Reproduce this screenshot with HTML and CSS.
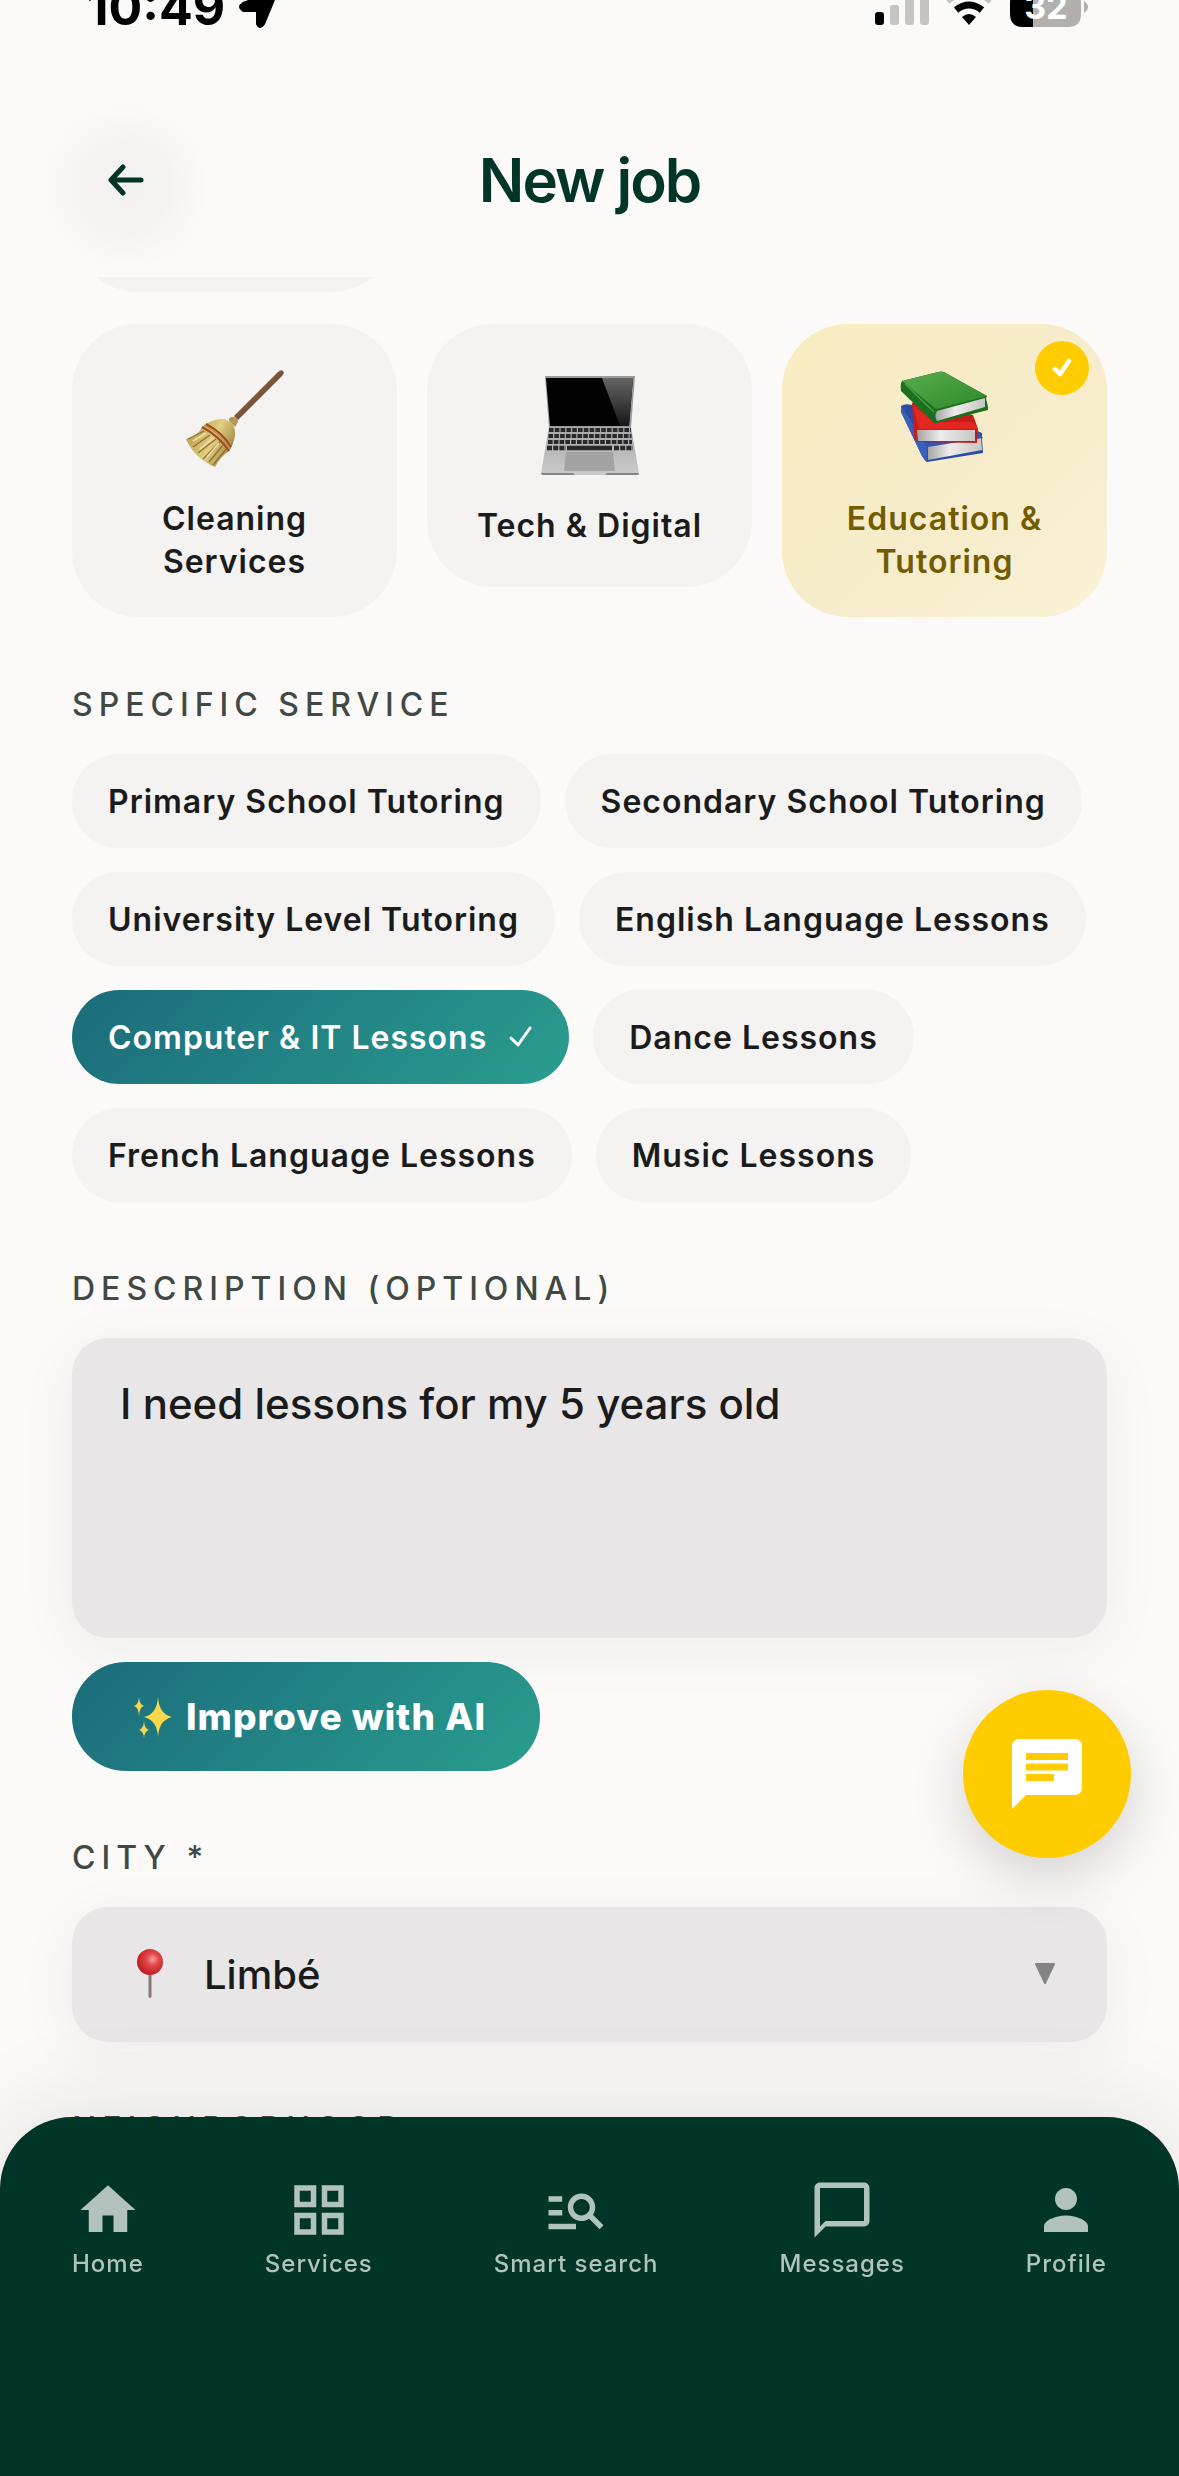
FILE: index.html
```html
<!DOCTYPE html>
<html lang="en">
<head>
<meta charset="utf-8">
<meta name="viewport" content="width=device-width, initial-scale=1">
<title>New job</title>
<link rel="stylesheet" href="styles.css">
</head>

<body>

<div class="status">
  <div class="status-time">
    <span>10:49</span>
    <svg width="42" height="42" viewBox="0 0 42 42"><path d="M40 4 L26 38 Q22 44 19 38 V25 H5 Q-1 21 5 17 Z" fill="#000" stroke="#000" stroke-width="2" stroke-linejoin="round"/></svg>
  </div>
  <svg class="status-icons" width="214" height="40" viewBox="0 0 214 40">
    <rect x="0" y="24" width="9" height="13" rx="3"/>
    <g fill="#c5c4c3">
      <rect x="15" y="17" width="9" height="20" rx="3"/>
      <rect x="30" y="9" width="9" height="28" rx="3"/>
      <rect x="45" y="2" width="9" height="35" rx="3"/>
    </g>
    <path d="M94 37 L87 29 Q94 23 101 29 Z"/>
    <path d="M81 22 Q94 12 107 22" fill="none" stroke="#000" stroke-width="7"/>
    <path d="M72 13 Q94 -5 116 13" fill="none" stroke="#c5c4c3" stroke-width="7"/>
    <path d="M148 2 H158 V39 H148 Q135 39 135 26 V15 Q135 2 148 2Z"/>
    <path d="M158 2 H193 Q206 2 206 15 V26 Q206 39 193 39 H158Z" fill="#b1b0af"/>
    <path d="M209 13 Q217 19 209 25Z" fill="#b1b0af"/>
    <text class="battery-level" x="171" y="31">32</text>
  </svg>
</div>

<header class="header">
  <button class="back" type="button" aria-label="Back">
    <svg width="38" height="32" viewBox="0 0 38 32"><path d="M16 3 L4 16 L16 29 M5 16 H34" fill="none" stroke="#003527" stroke-width="5" stroke-linecap="round" stroke-linejoin="round"/></svg>
  </button>
  <h1>New job</h1>
</header>

<main class="content">

  <div class="previous-row">
    <div class="card"></div>
  </div>

  <div class="categories">
    <button class="card" type="button">
      <svg class="card-icon" viewBox="0 0 100 100">
        <defs>
          <linearGradient id="straw" x1="0" y1="0.3" x2="1" y2="0.8">
            <stop offset="0" stop-color="#b79b4e"/><stop offset="0.5" stop-color="#e2cd80"/><stop offset="1" stop-color="#8f7532"/>
          </linearGradient>
          <linearGradient id="stick" x1="0" y1="0" x2="1" y2="1">
            <stop offset="0" stop-color="#9a6a4c"/><stop offset="1" stop-color="#5f3b28"/>
          </linearGradient>
        </defs>
        <path d="M49 47 L93 3 Q96 0 98 2 Q100 4 97 7 L53 51Z" fill="url(#stick)"/>
        <path d="M44 52 Q43 48 48 48 Q53 48 53 53 L50 58Z" fill="#b39a4d"/>
        <path d="M17 58 Q27 49 40 50 Q51 55 50 66 Q49 75 44 82 Q35 88 30 98 Q10 90 1 70 Q12 68 17 58Z" fill="url(#straw)"/>
        <path d="M3 70 L19 62 M8 78 L25 66 M13 84 L31 70 M18 90 L35 73 M24 93 L38 76 M28 96 L42 79" stroke="#8c7234" stroke-width="1.3"/>
        <path d="M8 72 L21 64 M15 80 L28 69 M22 88 L34 74" stroke="#f1dfa0" stroke-width="1.5"/>
        <path d="M17 58 Q34 67 44 82 M21 55 Q38 64 46 78" fill="none" stroke="#9c4f22" stroke-width="2"/>
        <path d="M19 56 Q36 65 45 80" fill="none" stroke="#c58c3e" stroke-width="1.4"/>
      </svg>
      <span>Cleaning Services</span>
    </button>

    <button class="card" type="button">
      <svg class="card-icon" viewBox="0 0 100 100">
        <defs>
          <linearGradient id="glare" x1="0" y1="0" x2="0" y2="1">
            <stop offset="0" stop-color="#666"/><stop offset="1" stop-color="#161616"/>
          </linearGradient>
          <linearGradient id="alu" x1="0" y1="0" x2="0" y2="1">
            <stop offset="0" stop-color="#a7a7a8"/><stop offset="1" stop-color="#cbcbcb"/>
          </linearGradient>
        </defs>
        <path d="M5 0 H95 L91 52 H9Z" fill="#9b9b9c"/>
        <path d="M6 2 H93 L89 50 H10Z" fill="#020202"/>
        <path d="M62 2 H93 L89 50 H80Z" fill="url(#glare)"/>
        <path d="M9 51 H91 L99 97 Q99 99 97 99 H3 Q1 99 1 97Z" fill="url(#alu)"/>
        <path d="M9 54 H91 M8.5 60 H91.5 M8 66 H92" stroke="#29292b" stroke-width="4.2" stroke-dasharray="4.6 1.2"/>
        <path d="M7 72 H26 M74 72 H93" stroke="#29292b" stroke-width="4.6" stroke-dasharray="5 1.2"/>
        <path d="M27 72 H72" stroke="#29292b" stroke-width="4.6"/>
        <path d="M26 76 H73 L75 95 H24Z" fill="#a3a3a4"/>
        <path d="M1 97 H33 L35 99 H65 L67 97 H99 Q99 99 97 99 H3 Q1 99 1 97Z" fill="#858586"/>
      </svg>
      <span>Tech &amp; Digital</span>
    </button>

    <button class="card card-selected" type="button" aria-pressed="true">
      <svg class="card-icon" viewBox="0 0 100 100">
        <defs>
          <linearGradient id="green" x1="0" y1="0" x2="1" y2="1">
            <stop offset="0" stop-color="#5aac4c"/><stop offset="1" stop-color="#2c8a2c"/>
          </linearGradient>
          <linearGradient id="pages" x1="0" y1="0" x2="1" y2="0">
            <stop offset="0" stop-color="#a5a3a3"/><stop offset="0.4" stop-color="#efedec"/><stop offset="1" stop-color="#c7c5c3"/>
          </linearGradient>
        </defs>
        <path d="M6 37 Q10 34 17 36 L87 64 V70 L88 84 L32 93 Q29 91 27 87 L6 43Z" fill="#2c4ba5"/>
        <path d="M6 37 L32 77 L32 93 L27 87 L6 43Z" fill="#3a60bd"/>
        <path d="M33 76 L86 68 L87 81 L33 91Z" fill="url(#pages)"/>
        <path d="M28 75 L83 62 L88 69 L33 78Z" fill="#3553b1"/>
        <path d="M17 34 Q20 31 27 34 L78 46 L83 60 L82 74 L24 73 Q20 73 19 66Z" fill="#c21e1c"/>
        <path d="M18 36 L39 53 H78 L83 60 H24Z" fill="#e3261f"/>
        <path d="M22 61 H80 L80 72 H23Z" fill="url(#pages)"/>
        <path d="M7 12 Q5 15 6 22 L38 53 Q39 55 42 54 L93 41 V38 L91 29 L92 27 L49 3 Q46 2 43 3Z" fill="#1b701f"/>
        <path d="M42 42 L90 29 V38 L42 52 Q39 47 42 42Z" fill="url(#pages)"/>
        <path d="M7 12 L44 3 Q47 2 50 4 L92 27 L41 40Z" fill="url(#green)"/>
        <path d="M10 15 L39 43" stroke="#4c9e42" stroke-width="1.5"/>
      </svg>
      <span>Education &amp; Tutoring</span>
      <i class="badge">
        <svg width="20" height="20" viewBox="0 0 20 20"><path d="M3 11 L8 16 L17 3" fill="none" stroke="#fff" stroke-width="4.5" stroke-linecap="round" stroke-linejoin="round"/></svg>
      </i>
    </button>
  </div>

  <section class="group">
    <h2 class="label">SPECIFIC SERVICE</h2>
    <div class="chips">
      <button class="chip" type="button">Primary School Tutoring</button>
      <button class="chip" type="button">Secondary School Tutoring</button>
      <button class="chip" type="button">University Level Tutoring</button>
      <button class="chip" type="button">English Language Lessons</button>
      <button class="chip chip-selected" type="button" aria-pressed="true">Computer &amp; IT Lessons
        <svg width="24" height="24" viewBox="0 0 24 24"><path d="M2 13 L9 20 L21 3" fill="none" stroke="#fff" stroke-width="3" stroke-linecap="round" stroke-linejoin="round"/></svg>
      </button>
      <button class="chip" type="button">Dance Lessons</button>
      <button class="chip" type="button">French Language Lessons</button>
      <button class="chip" type="button">Music Lessons</button>
    </div>
  </section>

  <section class="group">
    <label class="label" for="description">DESCRIPTION (OPTIONAL)</label>
    <textarea class="field description" id="description">I need lessons for my 5 years old</textarea>
    <button class="improve" type="button">
      <svg width="42" height="42" viewBox="0 0 42 42" fill="#fbd84b">
        <path d="M26 1 Q27 18 40 21 Q27 24 26 41 Q25 24 12 21 Q25 18 26 1Z"/>
        <path d="M7 1 Q7.5 9 12 10 Q7.5 11 7 20 Q6.5 11 2 10 Q6.5 9 7 1Z"/>
        <path d="M12 25 Q12.5 33 17 34 Q12.5 35 12 42 Q11.5 35 7 34 Q11.5 33 12 25Z"/>
      </svg>
      Improve with AI
    </button>
  </section>

  <section class="group">
    <label class="label" for="city">CITY *</label>
    <div class="city">
      <select class="field" id="city">
        <option>Limbé</option>
      </select>
      <svg class="city-pin" width="28" height="50" viewBox="0 0 28 50">
        <defs>
          <radialGradient id="pin" cx="0.6" cy="0.4" r="0.6">
            <stop offset="0" stop-color="#f9a09a"/><stop offset="0.4" stop-color="#e2464a"/><stop offset="1" stop-color="#bf1f20"/>
          </radialGradient>
        </defs>
        <path d="M12.5 24 H15.5 V48 Q14 50 12.5 48Z" fill="#85787a"/>
        <circle cx="14" cy="13" r="13" fill="url(#pin)"/>
      </svg>
      <svg class="city-arrow" width="22" height="22" viewBox="0 0 22 22"><path d="M2 1 H20 L11 20Z" fill="#858485" stroke="#858485" stroke-width="2" stroke-linejoin="round"/></svg>
    </div>
  </section>

  <section class="group">
    <h2 class="label">NEIGHBORHOOD</h2>
  </section>

</main>

<button class="chat" type="button" aria-label="Chat">
  <svg width="84" height="84" viewBox="0 0 24 24"><path fill="#fff" d="M20 2H4c-1.1 0-1.99.9-1.99 2L2 22l4-4h14c1.1 0 2-.9 2-2V4c0-1.1-.9-2-2-2zM6 9h12v2H6V9zm8 5H6v-2h8v2zm4-6H6V6h12v2z"/></svg>
</button>

<nav class="nav">
  <a href="#home">
    <svg viewBox="0 0 24 24"><path d="M10 20v-6h4v6h5v-8h3L12 3 2 12h3v8z"/></svg>
    Home
  </a>
  <a href="#services">
    <svg viewBox="0 0 24 24"><path d="M3 3v8h8V3H3zm6 6H5V5h4v4zm-6 4v8h8v-8H3zm6 6H5v-4h4v4zm4-16v8h8V3h-8zm6 6h-4V5h4v4zm-6 4v8h8v-8h-8zm6 6h-4v-4h4v4z"/></svg>
    Services
  </a>
  <a href="#search">
    <svg viewBox="0 0 24 24"><path d="M7 9H2V7h5v2zm0 3H2v2h5v-2zm13.59 7-3.83-3.83c-.8.52-1.74.83-2.76.83-2.76 0-5-2.24-5-5s2.24-5 5-5 5 2.24 5 5c0 1.02-.31 1.96-.83 2.75L22 17.59 20.59 19zM17 11c0-1.65-1.35-3-3-3s-3 1.35-3 3 1.35 3 3 3 3-1.35 3-3zM2 19h10v-2H2v2z"/></svg>
    Smart search
  </a>
  <a href="#messages">
    <svg viewBox="0 0 24 24"><path d="M20 2H4c-1.1 0-2 .9-2 2v18l4-4h14c1.1 0 2-.9 2-2V4c0-1.1-.9-2-2-2zm0 14H6l-2 2V4h16v12z"/></svg>
    Messages
  </a>
  <a href="#profile">
    <svg viewBox="0 0 24 24"><path d="M12 12c2.21 0 4-1.79 4-4s-1.79-4-4-4-4 1.79-4 4 1.79 4 4 4zm0 2c-2.67 0-8 1.34-8 4v2h16v-2c0-2.66-5.33-4-8-4z"/></svg>
    Profile
  </a>
</nav>

</body>
</html>
```

FILE: styles.css
```css
* { box-sizing: border-box; }

body {
  margin: 0;
  height: 100vh;
  overflow: hidden;
  background: #fcfaf9;
  color: #1b1b1b;
  font-family: Inter, "Liberation Sans", sans-serif;
}

button, textarea, select {
  font: inherit;
  color: inherit;
  border: 0;
}

/* Status bar */

.status {
  display: flex;
  justify-content: space-between;
  align-items: flex-end;
  height: 28px;
  padding: 0 90px 0 87px;
  overflow: hidden;
}

.status-time {
  display: flex;
  align-items: flex-end;
  gap: 13px;
  color: #000;
  font-size: 50px;
  font-weight: 700;
  line-height: 42px;
}

.battery-level {
  fill: #fff;
  font-size: 34px;
  font-weight: 700;
  text-anchor: middle;
}

/* Header */

.header {
  display: grid;
  grid-template-columns: 1fr auto 1fr;
  align-items: center;
  height: 249px;
  padding: 55px 40px 0;
}

.header h1 {
  margin: 0;
  color: #003527;
  font-size: 60px;
  font-weight: 600;
  letter-spacing: -2px;
}

.back {
  display: flex;
  align-items: center;
  justify-content: center;
  width: 172px;
  height: 172px;
  background: radial-gradient(circle at 50% 54%, #f3f2f1 0, #f4f3f2 32%, rgba(252, 250, 249, 0) 66%);
}

/* Form */

.content { padding: 0 72px; }

.previous-row,
.categories {
  display: grid;
  grid-template-columns: repeat(3, 1fr);
  align-items: start;
  gap: 30px;
}

/* only the bottom edge of the row above stays in view */
.previous-row {
  grid-template-rows: 15px;
  align-items: end;
  height: 15px;
  margin-bottom: 32px;
  overflow: hidden;
}

.categories { padding-bottom: 1px; }

.card {
  position: relative;
  display: flex;
  flex-direction: column;
  align-items: center;
  justify-content: center;
  min-height: 263px;
  padding: 45px 36px 34px;
  border-radius: 66px;
  background: #f4f3f2;
  font-size: 32px;
  font-weight: 600;
  line-height: 43px;
  letter-spacing: 1px;
}

.card-icon {
  width: 100px;
  height: 100px;
  margin-bottom: 28px;
}

.card-selected {
  background: linear-gradient(135deg, #faecc0, #f6ecca 50%, #fbf2d6);
  color: #735c00;
}

.badge {
  position: absolute;
  top: 17px;
  right: 18px;
  display: flex;
  align-items: center;
  justify-content: center;
  width: 54px;
  height: 54px;
  border-radius: 50%;
  background: #ffcc00;
}

.group {
  display: flex;
  flex-direction: column;
  align-items: flex-start;
  margin-top: 65px;
}

.label {
  margin: 0 0 28px;
  color: #404944;
  font-size: 32px;
  font-weight: 500;
  line-height: 43px;
  letter-spacing: 6px;
}

.chips {
  display: flex;
  flex-wrap: wrap;
  gap: 24px;
}

.chip {
  display: flex;
  align-items: center;
  gap: 22px;
  height: 94px;
  padding: 0 36px;
  border-radius: 47px;
  background: #f4f3f2;
  font-size: 32px;
  font-weight: 600;
  letter-spacing: 1px;
}

.chip-selected,
.improve {
  background: linear-gradient(135deg, #1b6b7b, #2a9d8f);
  color: #fff;
}

.field {
  width: 100%;
  border-radius: 36px;
  background: #e8e6e7;
  box-shadow: 0 12px 60px rgba(27, 27, 27, 0.06);
  font-weight: 500;
}

.description {
  height: 300px;
  padding: 40px 48px;
  font-size: 42px;
  line-height: 52px;
  resize: none;
}

.improve {
  display: flex;
  align-items: center;
  gap: 12px;
  height: 109px;
  margin-top: 24px;
  padding: 0 54px 0 60px;
  border-radius: 54px;
  font-size: 37px;
  font-weight: 800;
  letter-spacing: 1px;
}

.city {
  position: relative;
  width: 100%;
}

.city .field {
  height: 135px;
  padding: 0 132px;
  appearance: none;
  font-size: 40px;
}

.city-pin {
  position: absolute;
  top: 42px;
  left: 64px;
}

.city-arrow {
  position: absolute;
  top: 56px;
  right: 51px;
}

/* Floating chat button */

.chat {
  position: fixed;
  right: 48px;
  bottom: 618px;
  display: flex;
  align-items: center;
  justify-content: center;
  width: 168px;
  height: 168px;
  border-radius: 50%;
  background: #ffcc00;
  box-shadow: 0 18px 54px rgba(0, 0, 0, 0.16);
}

/* Bottom navigation */

.nav {
  position: fixed;
  right: 0;
  bottom: 0;
  left: 0;
  display: flex;
  justify-content: space-between;
  align-items: flex-start;
  height: 359px;
  padding: 60px 72px 0;
  border-radius: 72px 72px 0 0;
  background: #003527;
  box-shadow: 0 -12px 90px rgba(27, 27, 27, 0.1);
}

.nav a {
  display: flex;
  flex-direction: column;
  align-items: center;
  gap: 6px;
  color: #b2c3be;
  font-size: 24px;
  font-weight: 500;
  line-height: 30px;
  letter-spacing: 1px;
  text-decoration: none;
}

.nav svg {
  width: 66px;
  height: 66px;
  fill: #b2c3be;
}
```
